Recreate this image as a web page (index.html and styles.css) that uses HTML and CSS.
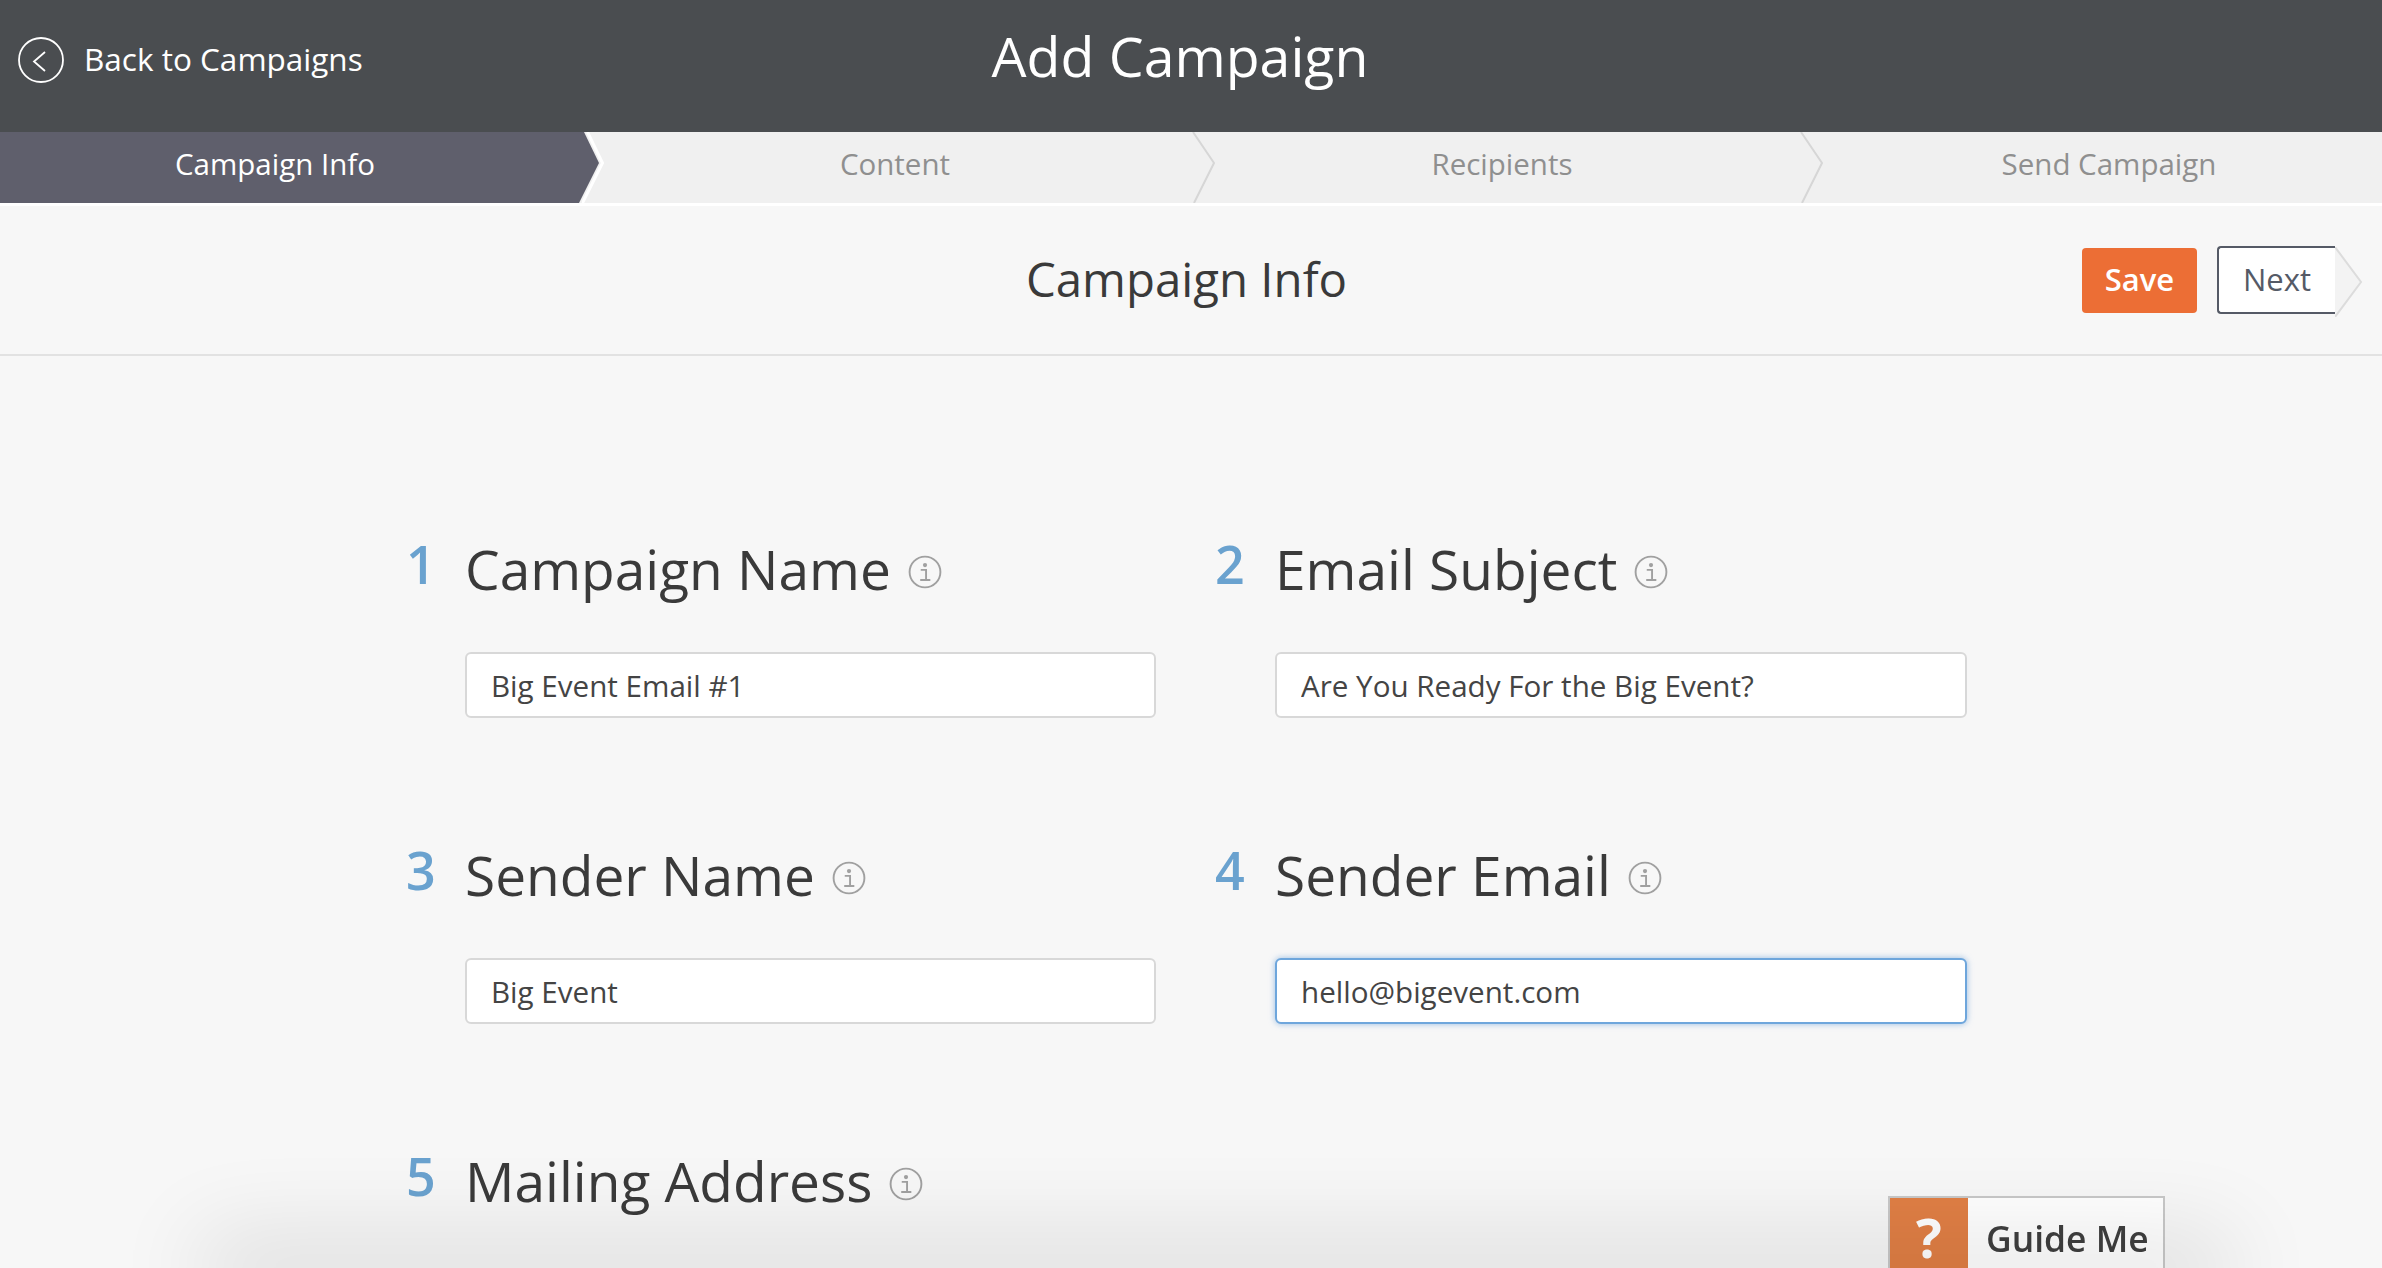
FILE: index.html
```html
<!DOCTYPE html>
<html lang="en">
<head>
    <meta charset="UTF-8">
    <title>Add Campaign</title>
    <link rel="stylesheet" href="styles.css">
</head>
<body>
    <header class="topbar">
        <a class="back-link" href="#">
            <svg class="back-icon" viewBox="0 0 46 46"><circle cx="23" cy="23" r="22" /><path d="M27 15 L16 24.5 L27 34" /></svg>
            <span class="back-text">Back to Campaigns</span>
        </a>
        <h1>Add Campaign</h1>
    </header>

    <nav class="steps">
        <a class="step step-active" href="#">Campaign Info</a>
        <a class="step step-content" href="#">Content<svg class="chevron-edge" viewBox="0 0 24 71"><path d="M5.5 0 L20.5 31 L0.5 71" /></svg><svg class="chevron" viewBox="0 0 24 71"><path d="M1 0 L22 31 L2 71" /></svg></a>
        <a class="step step-recipients" href="#">Recipients<svg class="chevron" viewBox="0 0 24 71"><path d="M1 0 L22 31 L2 71" /></svg></a>
        <a class="step step-send" href="#">Send Campaign</a>
    </nav>

    <div class="section-head">
        <h2>Campaign Info</h2>
        <div class="actions">
            <button class="btn-save">Save</button>
            <button class="btn-next">Next<svg class="next-tip" viewBox="0 0 28 70"><path d="M0 0 L26 35 L0 70" /></svg></button>
        </div>
    </div>

    <main class="form">
        <div class="field">
            <span class="num">1</span>
            <label>Campaign Name <svg class="info" viewBox="0 0 32 32"><circle cx="16" cy="16" r="14.5" /><circle class="dot" cx="16" cy="9.5" r="2" /><path d="M12 14 H17 V23.5 M11.5 23.5 H21" /></svg></label>
            <input type="text" value="Big Event Email #1">
        </div>
        <div class="field">
            <span class="num">2</span>
            <label>Email Subject <svg class="info" viewBox="0 0 32 32"><circle cx="16" cy="16" r="14.5" /><circle class="dot" cx="16" cy="9.5" r="2" /><path d="M12 14 H17 V23.5 M11.5 23.5 H21" /></svg></label>
            <input type="text" value="Are You Ready For the Big Event?">
        </div>
        <div class="field">
            <span class="num">3</span>
            <label>Sender Name <svg class="info" viewBox="0 0 32 32"><circle cx="16" cy="16" r="14.5" /><circle class="dot" cx="16" cy="9.5" r="2" /><path d="M12 14 H17 V23.5 M11.5 23.5 H21" /></svg></label>
            <input type="text" value="Big Event">
        </div>
        <div class="field">
            <span class="num">4</span>
            <label>Sender Email <svg class="info" viewBox="0 0 32 32"><circle cx="16" cy="16" r="14.5" /><circle class="dot" cx="16" cy="9.5" r="2" /><path d="M12 14 H17 V23.5 M11.5 23.5 H21" /></svg></label>
            <input class="focused" type="text" value="hello@bigevent.com">
        </div>
        <div class="field field-last">
            <span class="num">5</span>
            <label>Mailing Address <svg class="info" viewBox="0 0 32 32"><circle cx="16" cy="16" r="14.5" /><circle class="dot" cx="16" cy="9.5" r="2" /><path d="M12 14 H17 V23.5 M11.5 23.5 H21" /></svg></label>
        </div>
    </main>

    <a class="guide" href="#">
        <span class="guide-mark">?</span>
        <span class="guide-text">Guide Me</span>
    </a>

    <div class="bottom-shadow"></div>
</body>
</html>
```

FILE: styles.css
```css
html, body {
    height: 100%;
    overflow: hidden;
}

body {
    margin: 0;
    background-color: #f7f7f7;
    color: #3a3a3a;
    font-family: 'Open Sans', 'Liberation Sans', sans-serif;
}

a {
    text-decoration: none;
}

/* top bar */
.topbar {
    position: relative;
    height: 132px;
    background-color: #4a4d50;
    color: #ffffff;
    display: flex;
    align-items: flex-start;
    box-sizing: border-box;
    padding: 37px 0 0 18px;
}

.back-link {
    display: flex;
    align-items: center;
    gap: 20px;
    color: #ffffff;
    font-size: 31.5px;
    line-height: 46px;
}

.back-text {
    margin-top: -3px;
}

.back-icon {
    width: 46px;
    height: 46px;
    fill: none;
    stroke: #ffffff;
    stroke-width: 1.8;
}

.topbar h1 {
    position: absolute;
    left: 0;
    right: 0;
    top: 18px;
    margin: 0;
    padding-right: 22px;
    font-size: 55.4px;
    font-weight: 400;
    line-height: 76px;
    text-align: center;
    pointer-events: none;
}

/* steps */
.steps {
    display: flex;
    height: 71px;
    background-color: #f0f0f0;
    border-bottom: 3px solid #ffffff;
}

.step {
    position: relative;
    box-sizing: border-box;
    text-align: center;
    color: #8f8f8f;
    font-size: 29.5px;
    line-height: 64px;
}

.step-active {
    width: 600px;
    padding-right: 50px;
    color: #ffffff;
    background-color: #5f5f6c;
    clip-path: polygon(0 0, 584px 0, 599px 31px, 579px 71px, 0 71px);
}

.step-content {
    width: 612px;
    padding-right: 22px;
}

.step-recipients {
    width: 608px;
    padding-right: 28px;
}

.step-send {
    flex: 1;
    padding-left: 16px;
}

.chevron {
    position: absolute;
    right: -4px;
    top: 0;
    width: 24px;
    height: 71px;
    fill: none;
    stroke: #d6d6d6;
    stroke-width: 2;
}

.chevron-edge {
    position: absolute;
    left: -18px;
    top: 0;
    width: 24px;
    height: 71px;
    fill: none;
    stroke: #ffffff;
    stroke-width: 3;
}

/* title row */
.section-head {
    position: relative;
    height: 148px;
    border-bottom: 2px solid #e2e2e2;
    display: flex;
    align-items: center;
    justify-content: flex-end;
}

.section-head h2 {
    position: absolute;
    left: 0;
    right: 0;
    top: 40px;
    margin: 0;
    padding-right: 9px;
    text-align: center;
    font-size: 47.4px;
    font-weight: 400;
    line-height: 65px;
    pointer-events: none;
}

.actions {
    display: flex;
    align-items: center;
    gap: 20px;
    padding-right: 47px;
}

.actions button {
    font-family: inherit;
    font-size: 31px;
    line-height: 60px;
    box-sizing: border-box;
    padding: 0 0 2px;
}

.btn-save {
    width: 115px;
    height: 65px;
    background-color: #ec6e35;
    color: #ffffff;
    border: none;
    border-radius: 4px;
    font-weight: 600;
}

.btn-next {
    position: relative;
    width: 118px;
    height: 68px;
    background-color: #ffffff;
    color: #555a66;
    border: 2px solid #555a66;
    border-right: none;
    border-radius: 4px 0 0 4px;
}

.next-tip {
    position: absolute;
    left: 116px;
    top: -1px;
    width: 28px;
    height: 70px;
    fill: #f3f3f3;
    stroke: #dcdcdc;
    stroke-width: 2;
}

/* form */
.form {
    display: grid;
    grid-template-columns: 750px 752px;
    column-gap: 59px;
    margin-left: 406px;
    padding-top: 175px;
}

.field {
    display: grid;
    grid-template-columns: 59px 1fr;
    grid-template-rows: 76px 66px;
    row-gap: 45px;
    height: 306px;
    align-content: start;
}

.field:nth-child(even) {
    grid-template-columns: 60px 1fr;
}

.field-last {
    height: 76px;
    grid-template-rows: 76px;
}

.num {
    color: #6aa2cf;
    font-size: 52px;
    font-weight: 600;
    line-height: 66px;
}

.field label {
    display: flex;
    align-items: center;
    gap: 17px;
    font-size: 55px;
    font-weight: 400;
    line-height: 76px;
}

.field input {
    grid-column: 2;
    box-sizing: border-box;
    height: 66px;
    width: 100%;
    padding: 0 24px;
    background-color: #ffffff;
    border: 2px solid #d8d8d8;
    border-radius: 6px;
    color: #444444;
    font-family: inherit;
    font-size: 29.6px;
    outline: none;
}

.field input.focused {
    border-color: #6ea6dc;
    box-shadow: 0 0 6px rgba(90, 150, 215, 0.6);
}

.info {
    width: 34px;
    height: 34px;
    flex: none;
    margin-top: 6px;
    fill: none;
    stroke: #a0a0a0;
    stroke-width: 1.8;
}

.info .dot {
    fill: #a0a0a0;
    stroke: none;
}

/* bits lying over the page */
.guide {
    position: fixed;
    left: 1888px;
    top: 1196px;
    width: 277px;
    height: 72px;
    display: flex;
    background-color: #ffffff;
    border: 2px solid #c8c8c8;
    border-bottom: none;
    box-sizing: border-box;
}

.guide-mark {
    width: 78px;
    background-color: #e17f45;
    color: #ffffff;
    font-size: 54px;
    font-weight: 700;
    line-height: 54px;
    padding-top: 12px;
    text-align: center;
}

.guide-text {
    padding: 12px 0 0 18px;
    color: #3f3f3f;
    font-size: 35.4px;
    font-weight: 600;
    line-height: 56px;
}

.bottom-shadow {
    position: fixed;
    left: 230px;
    right: 180px;
    bottom: 0;
    height: 0;
    box-shadow: 0 0 90px 30px rgba(0, 0, 0, 0.12);
    pointer-events: none;
}
```
